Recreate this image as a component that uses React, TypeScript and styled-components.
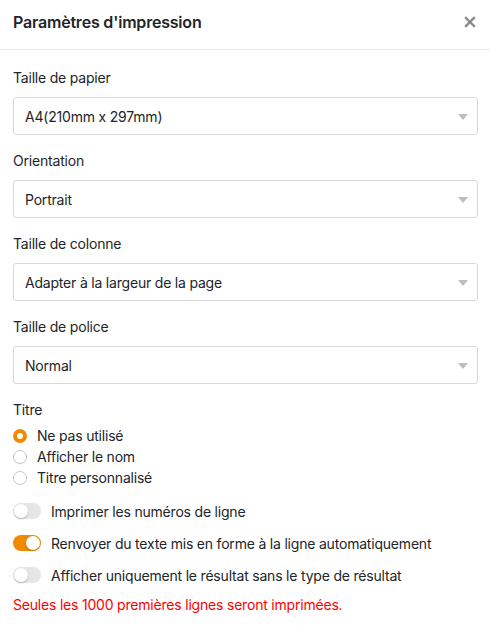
import { createGlobalStyle, styled } from "styled-components";

const GlobalStyle = createGlobalStyle`
  body {
    margin: 0;
    background: #fff;
    font-family: Inter, "Noto Sans", "Liberation Sans", sans-serif;
    color: #212529;
    letter-spacing: -0.2px;
  }
`;

const selects = [
  { label: "Taille de papier", value: "A4(210mm x 297mm)" },
  { label: "Orientation", value: "Portrait" },
  { label: "Taille de colonne", value: "Adapter à la largeur de la page" },
  { label: "Taille de police", value: "Normal" },
];

const radios = ["Ne pas utilisé", "Afficher le nom", "Titre personnalisé"];

const toggles = [
  { text: "Imprimer les numéros de ligne", on: false },
  { text: "Renvoyer du texte mis en forme à la ligne automatiquement", on: true },
  { text: "Afficher uniquement le résultat sans le type de résultat", on: false },
];

const App = () => {
  return (
    <>
      <GlobalStyle />
      <Dialog>
        <Header>
          <Title>Paramètres d'impression</Title>
          <CloseButton aria-label="close">
            <svg width="12" height="12" viewBox="0 0 12 12">
              <path d="M2 2 L10 10 M10 2 L2 10" stroke="#8a8a8a" strokeWidth="2.4" strokeLinecap="square" />
            </svg>
          </CloseButton>
        </Header>
        <Body>
          {selects.map((s) => (
            <Group key={s.label}>
              <Label>{s.label}</Label>
              <Select>
                <span>{s.value}</span>
                <Caret />
              </Select>
            </Group>
          ))}
          <Label>Titre</Label>
          <RadioList>
            {radios.map((r, i) => (
              <RadioRow key={r}>
                <Radio $checked={i === 0} />
                {r}
              </RadioRow>
            ))}
          </RadioList>
          <ToggleList>
            {toggles.map((t) => (
              <ToggleRow key={t.text}>
                <Switch $on={t.on} />
                {t.text}
              </ToggleRow>
            ))}
          </ToggleList>
          <Warning>Seules les 1000 premières lignes seront imprimées.</Warning>
        </Body>
      </Dialog>
    </>
  );
};

export default App;

const Dialog = styled.div`
  width: 490px;
  min-height: 626px;
  background: #fff;
`;

const Header = styled.div`
  height: 50px;
  box-sizing: border-box;
  border-bottom: 1px solid #e9e9e9;
  display: flex;
  align-items: center;
  justify-content: space-between;
  padding: 0 13px 6px 13px;
`;

const Title = styled.h1`
  margin: 0;
  font-size: 16px;
  font-weight: 600;
  color: #212529;
`;

const CloseButton = styled.div`
  display: flex;
  align-items: center;
  justify-content: center;
  width: 14px;
  height: 14px;
`;

const Body = styled.div`
  padding: 18px 12px 0 13px;
`;

const Group = styled.div`
  margin-bottom: 16px;
`;

const Label = styled.div`
  font-size: 14px;
  line-height: 20px;
  color: #212529;
  margin-bottom: 9px;
`;

const Select = styled.div`
  height: 38px;
  box-sizing: border-box;
  border: 1px solid #d9d9d9;
  border-radius: 3px;
  display: flex;
  align-items: center;
  justify-content: space-between;
  padding: 0 9px 0 11px;
  font-size: 14px;
  color: #212529;
`;

const Caret = styled.span`
  width: 0;
  height: 0;
  border-left: 5px solid transparent;
  border-right: 5px solid transparent;
  border-top: 6px solid #bdbdbd;
  margin-top: 1px;
`;

const RadioList = styled.div`
  display: flex;
  flex-direction: column;
  margin-top: -4px;
`;

const RadioRow = styled.label`
  display: flex;
  align-items: center;
  gap: 10px;
  height: 21px;
  font-size: 14px;
  color: #212529;
`;

const Radio = styled.span<{ $checked: boolean }>`
  width: 14px;
  height: 14px;
  box-sizing: border-box;
  border-radius: 50%;
  border: ${(p) => (p.$checked ? "4px solid #f28a00" : "1px solid #c4c4c4")};
  background: #fff;
`;

const ToggleList = styled.div`
  display: flex;
  flex-direction: column;
  gap: 12px;
  margin-top: 13px;
`;

const ToggleRow = styled.div`
  display: flex;
  align-items: center;
  gap: 10px;
  height: 20px;
  font-size: 14px;
  color: #212529;
`;

const Switch = styled.span<{ $on: boolean }>`
  position: relative;
  width: 28px;
  height: 16px;
  border-radius: 8px;
  flex-shrink: 0;
  background: ${(p) => (p.$on ? "#f28a00" : "#e4e6ea")};

  &::after {
    content: "";
    position: absolute;
    top: 1px;
    left: ${(p) => (p.$on ? "13px" : "1px")};
    width: 14px;
    height: 14px;
    border-radius: 50%;
    background: #fff;
    box-shadow: 0 1px 2px rgba(0, 0, 0, 0.25);
  }
`;

const Warning = styled.div`
  margin-top: 10px;
  font-size: 14px;
  line-height: 20px;
  color: #ff0000;
`;
